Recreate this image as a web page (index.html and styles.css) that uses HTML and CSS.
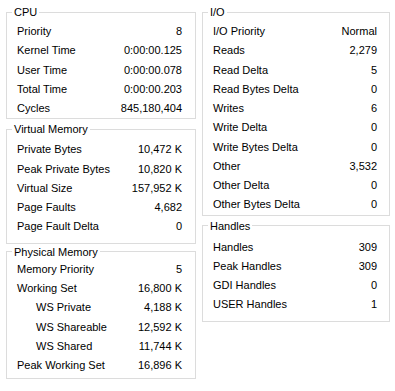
FILE: index.html
```html
<!DOCTYPE html>
<html lang="en">
<head>
  <meta charset="UTF-8" />
  <title>Process Properties - Performance</title>
  <link rel="stylesheet" href="styles.css">
</head>
<body>
  <div class="page">
    <div class="column left">
      <fieldset class="group cpu">
        <legend>CPU</legend>
        <div class="row"><span>Priority</span><span>8</span></div>
        <div class="row"><span>Kernel Time</span><span>0:00:00.125</span></div>
        <div class="row"><span>User Time</span><span>0:00:00.078</span></div>
        <div class="row"><span>Total Time</span><span>0:00:00.203</span></div>
        <div class="row"><span>Cycles</span><span>845,180,404</span></div>
      </fieldset>

      <fieldset class="group virtual">
        <legend>Virtual Memory</legend>
        <div class="row"><span>Private Bytes</span><span>10,472 K</span></div>
        <div class="row"><span>Peak Private Bytes</span><span>10,820 K</span></div>
        <div class="row"><span>Virtual Size</span><span>157,952 K</span></div>
        <div class="row"><span>Page Faults</span><span>4,682</span></div>
        <div class="row"><span>Page Fault Delta</span><span>0</span></div>
      </fieldset>

      <fieldset class="group physical">
        <legend>Physical Memory</legend>
        <div class="row"><span>Memory Priority</span><span>5</span></div>
        <div class="row"><span>Working Set</span><span>16,800 K</span></div>
        <div class="row sub"><span>WS Private</span><span>4,188 K</span></div>
        <div class="row sub"><span>WS Shareable</span><span>12,592 K</span></div>
        <div class="row sub"><span>WS Shared</span><span>11,744 K</span></div>
        <div class="row"><span>Peak Working Set</span><span>16,896 K</span></div>
      </fieldset>
    </div>

    <div class="column right">
      <fieldset class="group io">
        <legend>I/O</legend>
        <div class="row"><span>I/O Priority</span><span>Normal</span></div>
        <div class="row"><span>Reads</span><span>2,279</span></div>
        <div class="row"><span>Read Delta</span><span>5</span></div>
        <div class="row"><span>Read Bytes Delta</span><span>0</span></div>
        <div class="row"><span>Writes</span><span>6</span></div>
        <div class="row"><span>Write Delta</span><span>0</span></div>
        <div class="row"><span>Write Bytes Delta</span><span>0</span></div>
        <div class="row"><span>Other</span><span>3,532</span></div>
        <div class="row"><span>Other Delta</span><span>0</span></div>
        <div class="row"><span>Other Bytes Delta</span><span>0</span></div>
      </fieldset>

      <fieldset class="group handles">
        <legend>Handles</legend>
        <div class="row"><span>Handles</span><span>309</span></div>
        <div class="row"><span>Peak Handles</span><span>309</span></div>
        <div class="row"><span>GDI Handles</span><span>0</span></div>
        <div class="row"><span>USER Handles</span><span>1</span></div>
      </fieldset>
    </div>
  </div>
</body>
</html>
```

FILE: styles.css
```css
body {
  margin: 0;
  background: #fff;
  font-family: 'Liberation Sans', Arial, sans-serif;
  font-size: 11px;
  color: #000;
}

.page {
  display: flex;
  gap: 6px;
  padding: 6px 0 0 6px;
}

.column {
  display: flex;
  flex-direction: column;
}

.column.left {
  width: 190px;
}

.column.right {
  width: 188px;
}

.group {
  margin: 0;
  border: 1px solid #dcdcdc;
  padding: 0 13px 0 10px;
  min-width: 0;
}

.right .group {
  padding-right: 12px;
}

.group legend {
  margin-left: -5px;
  padding: 0 2px;
  line-height: 12px;
}

.row {
  display: flex;
  justify-content: space-between;
  height: 19.25px;
  line-height: 19px;
  white-space: nowrap;
}

.row.sub {
  padding-left: 19px;
}

.cpu {
  padding-top: 4px;
}

.virtual {
  margin-top: 4px;
  padding-top: 5px;
  padding-bottom: 6px;
}

.physical {
  margin-top: 2px;
  padding-top: 2px;
  padding-bottom: 2px;
}

.physical .row {
  height: 19.4px;
}

.io {
  padding-top: 4px;
}

.handles {
  margin-top: 4px;
  padding-top: 6px;
  padding-bottom: 7px;
}

.handles .row {
  height: 19px;
}
```
